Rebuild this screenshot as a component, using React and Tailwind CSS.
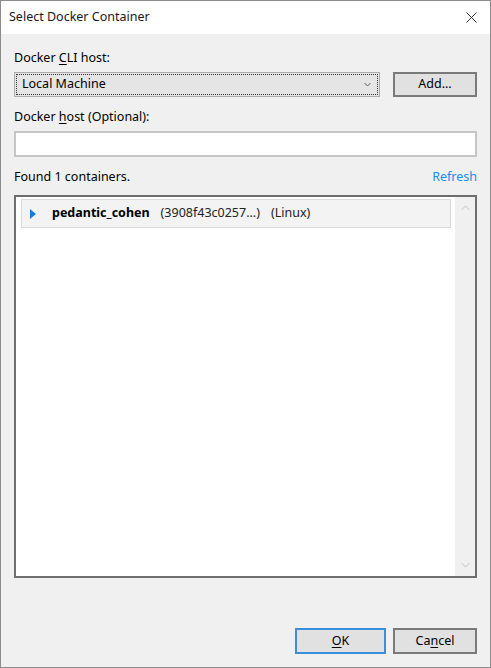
import React from 'react';

const font = { fontFamily: '"Segoe UI", "Noto Sans", "Open Sans", sans-serif' };

// Windows 10 style dialog
const Chevron = ({ up }) => (
  <svg width="9" height="6" viewBox="0 0 9 6" className="block">
    <path d={up ? 'M0.5 5 L4.5 1 L8.5 5' : 'M0.5 1 L4.5 5 L8.5 1'} fill="none" stroke="#c2c2c2" strokeWidth="1" />
  </svg>
);

const App = () => {
  return (
    <div className="w-[491px] h-[668px] bg-[#f0f0f0] border border-[#8c8c8c] flex flex-col text-[12.5px] text-[#000] overflow-hidden" style={font}>
      {/* title bar */}
      <div className="h-[33px] bg-white flex items-center justify-between pl-[8px] pr-[13px] shrink-0">
        <span className="text-[12.5px] text-[#1a1a1a]">Select Docker Container</span>
        <svg width="11" height="11" viewBox="0 0 11 11">
          <path d="M0.5 0.5 L10.5 10.5 M10.5 0.5 L0.5 10.5" stroke="#333" strokeWidth="1" />
        </svg>
      </div>

      <div className="flex-1 flex flex-col pl-[13px] pr-[13px] pt-[16px] pb-[13px]">
        <div className="leading-[16px]">Docker <span className="underline underline-offset-2">C</span>LI host:</div>
        <div className="flex gap-[13px] mt-[6px]">
          <div className="w-[366px] h-[25px] bg-[#e5e5e5] border border-[#acacac] p-[1px]">
            <div className="h-full border border-dotted border-[#333] flex items-center justify-between pl-[5px] pr-[6px]">
              <span>Local Machine</span>
              <svg width="7" height="5" viewBox="0 0 7 5">
                <path d="M0.5 1 L3.5 4 L6.5 1" fill="none" stroke="#555" strokeWidth="1" />
              </svg>
            </div>
          </div>
          <button className="w-[84px] h-[25px] bg-[#e1e1e1] border-2 border-[#7a7a7a] flex items-center justify-center">
            Add...
          </button>
        </div>

        <div className="leading-[16px] mt-[12px]">Docker <span className="underline underline-offset-2">h</span>ost (Optional):</div>
        <div className="mt-[6px] h-[26px] bg-white border-2 border-[#c6c6c6]"></div>

        <div className="flex justify-between leading-[16px] mt-[12px]">
          <span>Found 1 containers.</span>
          <span className="text-[#1a8ee6]">Refresh</span>
        </div>

        <div className="mt-[10px] h-[383px] bg-white border-2 border-[#6e6e6e] flex">
          <div className="flex-1 pl-[5px] pt-[2px] pr-[4px]">
            <div className="h-[29px] bg-[#f3f3f3] border border-[#dadada] flex items-center">
              <svg width="6" height="10" viewBox="0 0 6 10" className="ml-[8px]">
                <path d="M0 0 L6 5 L0 10 Z" fill="#1c7cd5" />
              </svg>
              <span className="font-bold ml-[16px]">pedantic_cohen</span>
              <span className="ml-[11px] text-[#222]">(3908f43c0257...)</span>
              <span className="ml-[11px] text-[#222]">(Linux)</span>
            </div>
          </div>
          <div className="w-[20px] bg-[#f0f0f0] flex flex-col items-center justify-between py-[8px]">
            <Chevron up />
            <Chevron />
          </div>
        </div>

        <div className="flex-1"></div>
        <div className="flex justify-end gap-[7px]">
          <button className="w-[91px] h-[26px] bg-[#e1e1e1] border-2 border-[#3b8fd9] flex items-center justify-center">
            <span><span className="underline underline-offset-2">O</span>K</span>
          </button>
          <button className="w-[84px] h-[26px] bg-[#e1e1e1] border-2 border-[#7a7a7a] flex items-center justify-center">
            <span>Ca<span className="underline underline-offset-2">n</span>cel</span>
          </button>
        </div>
      </div>
    </div>
  );
};

export default App;
